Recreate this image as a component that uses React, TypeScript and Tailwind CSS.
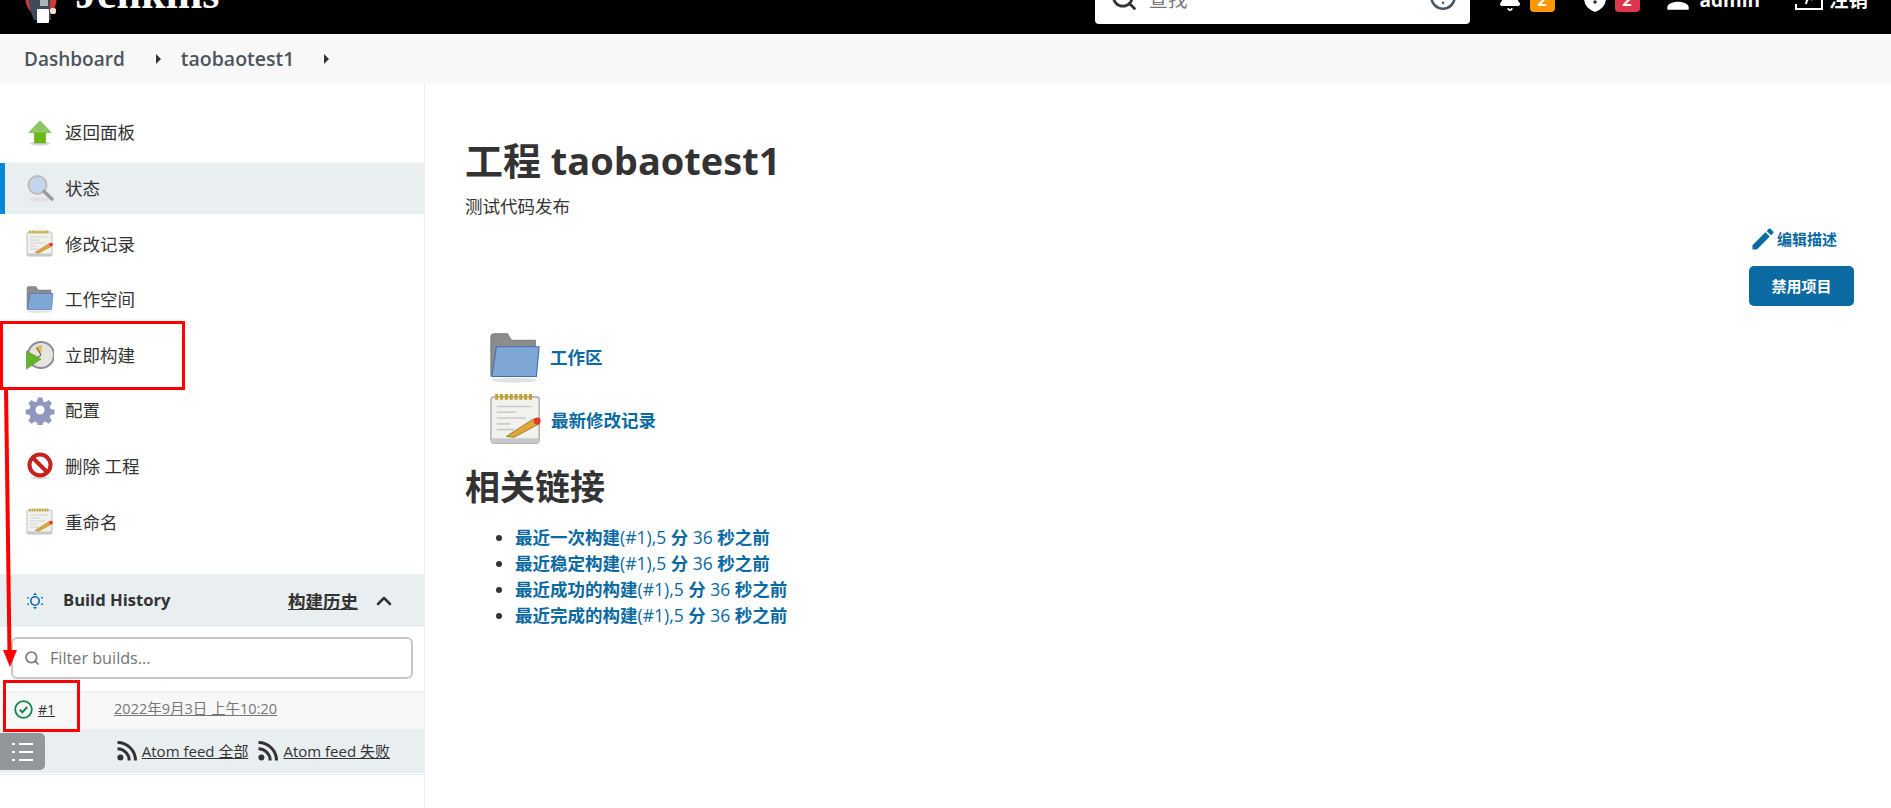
import { ChevronUp, Search, Bell, CircleHelp } from "lucide-react";
import { MdEdit, MdPerson } from "react-icons/md";

const cjk = "font-['Open_Sans','Noto_Sans_CJK_SC',sans-serif]";

const ArrowIcon = () => (
  <svg width="26" height="26" viewBox="0 0 26 26">
    <ellipse cx="13" cy="23.5" rx="10" ry="2" fill="#d8d8d8" />
    <path d="M13 1 L24 12.5 H18.5 V23 H7.5 V12.5 H2 Z" fill="#6cbb14" stroke="#5a9a2a" strokeWidth="0.6" />
    <path d="M13 1 L24 12.5 H2 Z" fill="#8fc965" />
  </svg>
);

const SearchIcon = () => (
  <svg width="28" height="28" viewBox="0 0 28 28">
    <ellipse cx="13" cy="25.5" rx="11" ry="2" fill="#e0e0e0" />
    <circle cx="11.5" cy="11" r="9" fill="#c3d6ee" stroke="#bbbbbb" strokeWidth="2" />
    <path d="M18 17.5 L26 25" stroke="#9a9a9a" strokeWidth="3.5" strokeLinecap="round" />
  </svg>
);

const NotepadIcon = ({ size = 28 }: { size?: number }) => (
  <svg width={size} height={size} viewBox="0 0 28 28">
    <rect x="1" y="2" width="25" height="24" rx="1.5" fill="#f1f1ee" stroke="#9b9b9b" strokeWidth="0.6" />
    <rect x="1" y="23.5" width="25" height="2.5" fill="#c8c8c8" />
    <path d="M4 0.5v3M6.5 0.5v3M9 0.5v3M11.5 0.5v3M14 0.5v3M16.5 0.5v3M19 0.5v3M21.5 0.5v3" stroke="#c0a32c" strokeWidth="1.6" />
    <path d="M4 7h18M4 10h10M4 13h15M4 16h7M4 19h9" stroke="#c9c9c9" strokeWidth="0.8" />
    <path d="M9 22.5 L23 13.5 L26 16 L13 23 Z" fill="#e0a63a" stroke="#8a6a20" strokeWidth="0.4" />
    <circle cx="25" cy="14.5" r="1.8" fill="#e8352b" />
  </svg>
);

const FolderIcon = ({ size = 28 }: { size?: number }) => (
  <svg width={size} height={size} viewBox="0 0 28 28">
    <path d="M1 3 Q1 1.5 2.5 1.5 H10 L12 5 H25 V24 H1 Z" fill="#8c8c8c" stroke="#777777" strokeWidth="0.5" />
    <path d="M4 8.5 H27 L25.5 24.5 H1.5 Z" fill="#7fa7d6" stroke="#3f6fb0" strokeWidth="0.6" />
    <ellipse cx="13.5" cy="26.5" rx="12" ry="1.3" fill="#e2e2e2" />
  </svg>
);

const ClockIcon = () => (
  <svg width="28" height="30" viewBox="0 0 28 30">
    <circle cx="15" cy="15" r="13" fill="#e7e4da" stroke="#8c89a6" strokeWidth="2" />
    <path d="M15 15 L9 8 A10 10 0 0 1 16 5 Z" fill="#d9c06a" />
    <path d="M15 15 L11 8 M15 15 L9 19" stroke="#333333" strokeWidth="0.8" />
    <path d="M0.5 11 L15 19 L0.5 29 Z" fill="#66b32e" stroke="#4f8f22" strokeWidth="0.6" />
  </svg>
);

const GearIcon = () => (
  <svg width="30" height="30" viewBox="0 0 30 30">
    <path
      d="M12.5 1h5l.8 4.2 2.7 1.1 3.6-2.4 3.5 3.5-2.4 3.6 1.1 2.7 4.2.8v5l-4.2.8-1.1 2.7 2.4 3.6-3.5 3.5-3.6-2.4-2.7 1.1-.8 4.2h-5l-.8-4.2-2.7-1.1-3.6 2.4-3.5-3.5 2.4-3.6-1.1-2.7-4.2-.8v-5l4.2-.8 1.1-2.7-2.4-3.6 3.5-3.5 3.6 2.4 2.7-1.1z"
      fill="#9297bf"
      transform="translate(1.6 1.6) scale(0.9)"
    />
    <circle cx="15" cy="15" r="5" fill="#ffffff" stroke="#6f7396" strokeWidth="0.6" />
  </svg>
);

const NoIcon = () => (
  <svg width="28" height="28" viewBox="0 0 28 28">
    <ellipse cx="14" cy="26" rx="10" ry="1.5" fill="#dddddd" />
    <circle cx="14" cy="13" r="10.5" fill="#ffffff" stroke="#c4211f" strokeWidth="4" />
    <path d="M7 6 L21 20" stroke="#c4211f" strokeWidth="4" />
  </svg>
);

const BuildHistoryIcon = () => (
  <svg width="18" height="18" viewBox="0 0 18 18" fill="none">
    <circle cx="9" cy="9" r="4.2" stroke="#0b6aa2" strokeWidth="1.6" />
    <path d="M9 .8 L11 3 H7 Z M9 17.2 L11 15 H7 Z" fill="#0b6aa2" />
    <path d="M2 5v1.5M16 5v1.5M2 11.5V13M16 11.5V13" stroke="#0b6aa2" strokeWidth="1.6" />
  </svg>
);

const JenkinsLogo = () => (
  <svg width="34" height="48" viewBox="0 -24 34 48" className="shrink-0">
    <path d="M0 -6 H32 Q32 6 27 12 H6 Q0 6 0 -6 Z" fill="#d33833" />
    <path d="M3 -6 H25 V8 L26 20 H9 Q4 10 3 -6 Z" fill="#3d4a57" />
    <path d="M15 0 H23 V6 H15 Z" fill="#a9b4bd" />
    <rect x="12" y="9" width="12" height="14" rx="1" fill="#ffffff" />
    <rect x="25" y="8" width="6" height="6" rx="2" fill="#f0e0c8" />
  </svg>
);

const ShieldIcon = () => (
  <svg width="22" height="28" viewBox="0 0 22 28" className="shrink-0">
    <path d="M11 0 L22 4 V12 Q22 22 11 26 Q0 22 0 12 V4 Z" fill="#ffffff" />
    <circle cx="11" cy="16" r="1.8" fill="#333333" />
  </svg>
);

const LogoutIcon = () => (
  <svg width="28" height="22" viewBox="0 0 28 22" fill="none" stroke="#ffffff" strokeWidth="2" className="shrink-0">
    <path d="M1 15 V20 H27 V9" />
    <path d="M11 15 Q12 8 19 7 M16 3 L21 7 L16 11" />
  </svg>
);

const FeedIcon = () => (
  <svg width="20" height="20" viewBox="0 0 20 20" fill="none" className="shrink-0">
    <circle cx="3.4" cy="16.6" r="3" fill="#333333" />
    <path d="M0.5 7.8 A11.7 11.7 0 0 1 12.2 19.5" stroke="#333333" strokeWidth="3" />
    <path d="M0.5 1.5 A18 18 0 0 1 18.5 19.5" stroke="#333333" strokeWidth="3" />
  </svg>
);

const Caret = () => (
  <span className="w-0 h-0 border-y-[5px] border-y-transparent border-l-[5px] border-l-[#333]" />
);

const tasks = [
  { icon: <ArrowIcon />, label: "返回面板" },
  { icon: <SearchIcon />, label: "状态", active: true },
  { icon: <NotepadIcon />, label: "修改记录" },
  { icon: <FolderIcon />, label: "工作空间" },
  { icon: <ClockIcon />, label: "立即构建" },
  { icon: <GearIcon />, label: "配置" },
  { icon: <NoIcon />, label: "删除 工程" },
  { icon: <NotepadIcon />, label: "重命名" },
];

const recent = [
  "最近一次构建",
  "最近稳定构建",
  "最近成功的构建",
  "最近完成的构建",
];

const App = () => {
  return (
    <div className={`relative h-[808px] overflow-hidden bg-white text-[#333] ${cjk}`}>
      {/* top bar, the page is scrolled so only the lower part shows */}
      <header className="h-[34px] bg-black overflow-hidden text-white">
        <div className="h-[48px] -mt-[24px] flex items-center pl-[25px] pr-[23px]">
          <JenkinsLogo />
          <span className="ml-[16px] mb-[12px] font-['Liberation_Serif',serif] font-bold text-[44px] leading-[44px]">Jenkins</span>
          <div className="ml-auto w-[375px] h-[48px] shrink-0 bg-white rounded-b-[4px] flex items-center pl-[15px] pr-[13px] text-[#777] font-normal">
            <Search size={28} color="#333" strokeWidth={2.4} className="-mt-[4px]" />
            <span className="ml-[11px] text-[19.5px]">查找</span>
            <CircleHelp size={28} color="#4b5563" strokeWidth={2.2} className="ml-auto -mt-[6px]" />
          </div>
          <Bell size={24} fill="white" className="ml-[28px] shrink-0" />
          <span className="ml-[8px] w-[25px] h-[24px] rounded-[4px] bg-[#ff9800] text-center font-bold text-[16px] leading-[24px]">2</span>
          <span className="ml-[29px] flex"><ShieldIcon /></span>
          <span className="ml-[9px] w-[25px] h-[24px] rounded-[4px] bg-[#e0364c] text-center font-bold text-[16px] leading-[24px]">2</span>
          <MdPerson size={32} className="ml-[22px] shrink-0 -mt-[3px]" />
          <span className="ml-[6px] font-bold text-[19px]">admin</span>
          <span className="ml-[35px] flex"><LogoutIcon /></span>
          <span className="ml-[6px] font-bold text-[19.5px]">注销</span>
        </div>
      </header>

      <nav className="h-[50px] bg-[#f8f8f8] flex items-center pl-6 font-semibold text-[19px] text-[#4d545d]">
        <span>Dashboard</span>
        <span className="ml-[31px] flex"><Caret /></span>
        <span className="ml-[20px] text-[19.5px]">taobaotest1</span>
        <span className="ml-[30px] flex"><Caret /></span>
      </nav>

      <div className="flex h-[724px]">
        <aside className="w-[425px] shrink-0 border-r border-[#e9eef1] pt-[23px]">
          <div className="flex flex-col gap-[4.6px]">
            {tasks.map((t) => (
              <div
                key={t.label}
                className={`h-[51px] flex items-center pl-[25px] border-l-[5px] ${t.active ? "bg-[#e9eef1] border-[#0389d5]" : "border-transparent"}`}
              >
                <span className="w-[30px] h-[30px] flex items-center justify-center shrink-0 -ml-[5px]">{t.icon}</span>
                <span className="ml-[10px] text-[17.5px] text-[#333]">{t.label}</span>
              </div>
            ))}
          </div>

          <div className="mt-[27px] h-[53px] bg-[#e9eef1] flex items-center pl-[26px] pr-[28px]">
            <BuildHistoryIcon />
            <span className="ml-[19px] font-bold text-[16.6px]">Build History</span>
            <span className="ml-auto font-bold text-[17.5px] underline">构建历史</span>
            <ChevronUp size={24} strokeWidth={2.5} className="ml-[14px]" />
          </div>

          <div className="mx-[11px] mt-[10px] h-[42px] rounded-[6px] border-2 border-[#c8c8c8] flex items-center pl-[11px] text-[16.2px] text-[#757575]">
            <Search size={16} color="#777" strokeWidth={2.5} />
            <span className="ml-[10px]">Filter builds...</span>
          </div>

          <div className="mt-[12px] h-[38px] pb-[3px] bg-[#f8f8f8] border-t border-[#ececec] flex items-center pl-[14px]">
            <svg width="19" height="19" viewBox="0 0 19 19" fill="none">
              <circle cx="9.5" cy="9.5" r="8.3" stroke="#138347" strokeWidth="1.8" />
              <path d="M5.8 9.8 L8.4 12.3 L13.2 7" stroke="#138347" strokeWidth="2" />
            </svg>
            <span className="ml-[5px] text-[14px] underline">#1</span>
            <span className="ml-[59px] text-[14.5px] text-[#777] underline">2022年9月3日 上午10:20</span>
          </div>

          <div className="h-[44px] bg-[#e9eef1] flex items-center justify-end pr-[34px] text-[15px]">
            <FeedIcon />
            <span className="ml-[5px] underline">Atom feed 全部</span>
            <span className="ml-[10px] flex"><FeedIcon /></span>
            <span className="ml-[5px] underline">Atom feed 失败</span>
          </div>
          <div className="mt-[1px] h-px bg-[#e9eef1]" />
        </aside>

        <main className="flex-1 flex justify-between pl-[40px] pr-[37px] pt-[53px]">
          <div>
            <h1 className="text-[38px] leading-[46px] font-bold">工程 taobaotest1</h1>
            <p className="mt-[11px] text-[17.5px] leading-[24px]">测试代码发布</p>

            <div className="mt-[113px] ml-[24px] flex flex-col gap-[10px]">
              <div className="flex items-center gap-[9px]">
                <FolderIcon size={52} />
                <span className="text-[#0b6aa2] font-bold text-[17.5px]">工作区</span>
              </div>
              <div className="flex items-center gap-[8px]">
                <NotepadIcon size={54} />
                <span className="text-[#0b6aa2] font-bold text-[17.5px]">最新修改记录</span>
              </div>
            </div>

            <h2 className="mt-[18px] text-[35px] leading-[44px] font-bold">相关链接</h2>
            <ul className="mt-[15px] ml-[50px] list-disc text-[17.5px] leading-[26px] text-[#333]">
              {recent.map((r) => (
                <li key={r}>
                  <span className="text-[#0b6aa2] font-bold">{r}</span>
                  <span className="text-[#0b6aa2]">(#1),5 </span>
                  <span className="text-[#0b6aa2] font-bold">分</span>
                  <span className="text-[#0b6aa2]"> 36 </span>
                  <span className="text-[#0b6aa2] font-bold">秒之前</span>
                </li>
              ))}
            </ul>
          </div>

          <div className="pt-[90px] flex flex-col items-end">
            <span className="h-[24px] flex items-center text-[#0b6aa2] font-bold text-[15px] mr-[17px]">
              <MdEdit size={28} />
              编辑描述
            </span>
            <button className="mt-[15px] w-[105px] h-[40px] rounded-[5px] bg-[#0b6aa2] text-white font-bold text-[15px]">禁用项目</button>
          </div>
        </main>
      </div>

      {/* side panel toggle, sits over the feed row */}
      <div className="absolute left-0 top-[733px] w-[45px] h-[37px] bg-[#94979a] rounded-r-[5px] flex flex-col items-center justify-center gap-[6px]">
        {[0, 1, 2].map((i) => (
          <div key={i} className="flex gap-[4px] items-center">
            <span className="w-[3px] h-[2px] bg-white" />
            <span className="w-[14px] h-[2px] bg-white" />
          </div>
        ))}
      </div>

      {/* red annotations drawn on the screenshot */}
      <div className="absolute left-0 top-[321px] w-[185px] h-[69px] border-[3px] border-[#ff0000]" />
      <div className="absolute left-[3px] top-[680px] w-[77px] h-[52px] border-[3px] border-[#ff0000]" />
      <svg className="absolute left-0 top-[388px]" width="24" height="300" viewBox="0 0 24 300">
        <path d="M6 0 L9.5 265" stroke="#ff0000" strokeWidth="4" />
        <path d="M3 262 H17 L10 279 Z" fill="#ff0000" />
      </svg>
    </div>
  );
};

export default App;
